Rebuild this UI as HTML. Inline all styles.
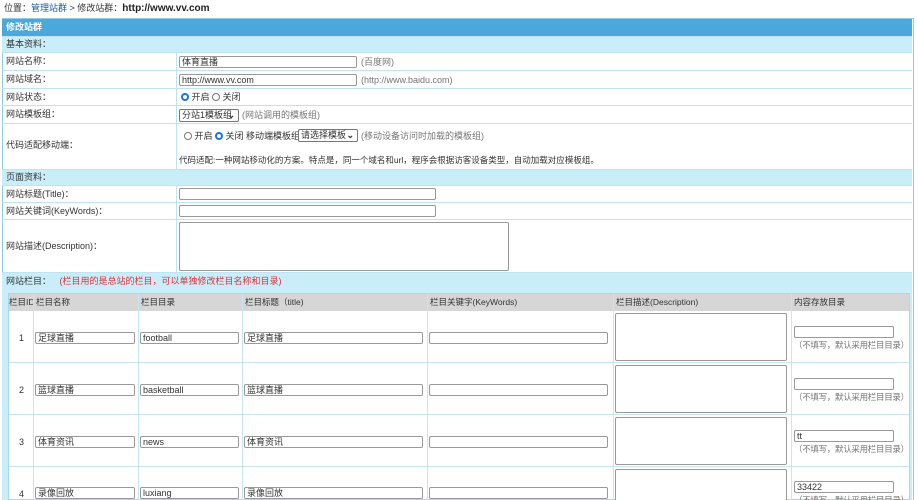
<!DOCTYPE html><html style="overflow:hidden;height:500px"><head><meta charset="utf-8"><style>
body{margin:0;width:918px;height:500px;overflow:hidden;background:#fff;font-family:"Liberation Sans","Noto Sans CJK SC",sans-serif;font-size:9px;line-height:11px;color:#333;position:relative}
.a{position:absolute;white-space:nowrap}
.row{position:absolute;left:2px;width:910px;border-bottom:1px solid #bfe3f0;box-sizing:border-box}
.sec{background:#c9eef9}
.lab{position:absolute;left:4px;white-space:nowrap}
.inp{position:absolute;height:12px;border:1px solid #999;border-radius:2px;background:#fff;box-sizing:border-box;font-size:9px;line-height:10px;padding-left:2px;white-space:nowrap;overflow:hidden}
.ta{position:absolute;border:1px solid #999;border-radius:2px;background:#fff;box-sizing:border-box}
.g{color:#777}
.rad{display:inline-block;width:8px;height:8px;border:1px solid #777;border-radius:50%;vertical-align:-1px;box-sizing:border-box;background:#fff}
.rad.on{border:2.5px solid #1a73e8}
.sel{position:absolute;height:13px;border:1px solid #777;border-radius:2px;box-sizing:border-box;background:#fff;font-size:9px;line-height:11px;padding-left:2px;white-space:nowrap;overflow:hidden}
.sel i{position:absolute;right:3px;top:0;font-style:normal;font-weight:bold}
.sm{font-size:8.5px}
</style></head><body>
<div class="a" style="left:4px;top:3px">位置：<span style="color:#1a5a9a">管理站群</span> &gt; 修改站群：<b style="font-size:10px;color:#222">http://www.vv.com</b></div>
<div style="position:absolute;left:2px;top:18px;width:912px;height:482px;border:1px solid #8fcbe6;border-bottom:none;box-sizing:border-box"></div>
<div class="row" style="top:19px;height:18px;background:#4aa8da;color:#fff;font-weight:bold"><span class="lab" style="top:3px">修改站群</span></div>
<div class="row sec" style="top:37px;height:16px"><span class="lab" style="top:2px">基本资料：</span></div>
<div class="row" style="top:53px;height:18px"><span class="lab" style="top:3px">网站名称：</span></div>
<div class="row" style="top:71px;height:18px"><span class="lab" style="top:3px">网站域名：</span></div>
<div class="row" style="top:89px;height:17px"><span class="lab" style="top:3px">网站状态：</span></div>
<div class="row" style="top:106px;height:18px"><span class="lab" style="top:3px">网站模板组：</span></div>
<div class="row" style="top:124px;height:46px"><span class="lab" style="top:16px">代码适配移动端：</span></div>
<div class="row sec" style="top:170px;height:16px"><span class="lab" style="top:2px">页面资料：</span></div>
<div class="row" style="top:186px;height:17px"><span class="lab" style="top:3px">网站标题(Title)：</span></div>
<div class="row" style="top:203px;height:17px"><span class="lab" style="top:3px">网站关键词(KeyWords)：</span></div>
<div class="row" style="top:220px;height:53px"><span class="lab" style="top:21px">网站描述(Description)：</span></div>
<div class="row sec" style="top:273px;height:227px;border:none"><span class="lab" style="top:3px">网站栏目： <span style="color:#e0303a;margin-left:6px">(栏目用的是总站的栏目，可以单独修改栏目名称和目录)</span></span></div>
<div style="position:absolute;left:176px;top:53px;width:1px;height:117px;background:#bfe3f0"></div>
<div style="position:absolute;left:176px;top:186px;width:1px;height:87px;background:#bfe3f0"></div>

<div class="inp" style="left:179px;top:56px;width:178px">体育直播</div><span class="a g" style="left:361px;top:57px">(百度网)</span>
<div class="inp" style="left:179px;top:74px;width:178px">http://www.vv.com</div><span class="a g" style="left:361px;top:75px">(http://www.baidu.com)</span>
<div class="a" style="left:181px;top:92px"><span class="rad on"></span> 开启 <span class="rad"></span> 关闭</div>
<div class="sel" style="left:179px;top:109px;width:60px">分站1模板组<i>⌄</i></div><span class="a g" style="left:242px;top:110px">(网站调用的模板组)</span>
<div class="a" style="left:184px;top:131px"><span class="rad"></span> 开启 <span class="rad on"></span> 关闭 移动端模板组: </div>
<div class="sel" style="left:298px;top:129px;width:60px">请选择模板<i>⌄</i></div><span class="a g" style="left:361px;top:131px">(移动设备访问时加载的模板组)</span>
<div class="a sm" style="left:179px;top:155px">代码适配:一种网站移动化的方案。特点是，同一个域名和url，程序会根据访客设备类型，自动加载对应模板组。</div>
<div class="inp" style="left:179px;top:188px;width:257px"></div>
<div class="inp" style="left:179px;top:205px;width:257px"></div>
<div class="ta" style="left:179px;top:222px;width:330px;height:49px"></div>

<div style="position:absolute;left:8px;top:293px;width:902px;height:207px;background:#fff;border:1px solid #a8d8ea;box-sizing:border-box"></div>
<div style="position:absolute;left:9px;top:294px;width:900px;height:17px;background:#d6d6d6"></div>
<span class="a sm" style="left:9px;top:297px">栏目ID</span><span class="a sm" style="left:36px;top:297px">栏目名称</span><span class="a sm" style="left:141px;top:297px">栏目目录</span><span class="a sm" style="left:245px;top:297px">栏目标题（title)</span><span class="a sm" style="left:430px;top:297px">栏目关键字(KeyWords)</span><span class="a sm" style="left:616px;top:297px">栏目描述(Description)</span><span class="a sm" style="left:794px;top:297px">内容存放目录</span>
<div style="position:absolute;top:294px;height:206px;left:33px;width:1px;background:#c6e6f2"></div>
<div style="position:absolute;top:294px;height:206px;left:138px;width:1px;background:#c6e6f2"></div>
<div style="position:absolute;top:294px;height:206px;left:242px;width:1px;background:#c6e6f2"></div>
<div style="position:absolute;top:294px;height:206px;left:427px;width:1px;background:#c6e6f2"></div>
<div style="position:absolute;top:294px;height:206px;left:613px;width:1px;background:#c6e6f2"></div>
<div style="position:absolute;top:294px;height:206px;left:791px;width:1px;background:#c6e6f2"></div>
<div style="position:absolute;left:9px;top:362px;width:900px;height:1px;background:#c6e6f2"></div>
<div style="position:absolute;left:9px;top:414px;width:900px;height:1px;background:#c6e6f2"></div>
<div style="position:absolute;left:9px;top:466px;width:900px;height:1px;background:#c6e6f2"></div>

<span class="a" style="left:19px;top:333px">1</span>
<div class="inp" style="left:35px;top:332px;width:100px">足球直播</div><div class="inp" style="left:140px;top:332px;width:99px">football</div><div class="inp" style="left:244px;top:332px;width:179px">足球直播</div><div class="inp" style="left:429px;top:332px;width:179px"></div>
<div class="ta" style="left:615px;top:313px;width:172px;height:48px"></div><div class="inp" style="left:794px;top:326px;width:100px"></div><span class="a g sm" style="left:794px;top:340px;letter-spacing:-0.3px">（不填写，默认采用栏目目录）</span>

<span class="a" style="left:19px;top:385px">2</span>
<div class="inp" style="left:35px;top:384px;width:100px">篮球直播</div><div class="inp" style="left:140px;top:384px;width:99px">basketball</div><div class="inp" style="left:244px;top:384px;width:179px">篮球直播</div><div class="inp" style="left:429px;top:384px;width:179px"></div>
<div class="ta" style="left:615px;top:365px;width:172px;height:48px"></div><div class="inp" style="left:794px;top:378px;width:100px"></div><span class="a g sm" style="left:794px;top:392px;letter-spacing:-0.3px">（不填写，默认采用栏目目录）</span>

<span class="a" style="left:19px;top:437px">3</span>
<div class="inp" style="left:35px;top:436px;width:100px">体育资讯</div><div class="inp" style="left:140px;top:436px;width:99px">news</div><div class="inp" style="left:244px;top:436px;width:179px">体育资讯</div><div class="inp" style="left:429px;top:436px;width:179px"></div>
<div class="ta" style="left:615px;top:417px;width:172px;height:48px"></div><div class="inp" style="left:794px;top:430px;width:100px">tt</div><span class="a g sm" style="left:794px;top:444px;letter-spacing:-0.3px">（不填写，默认采用栏目目录）</span>

<span class="a" style="left:19px;top:489px">4</span>
<div class="inp" style="left:35px;top:487px;width:100px">录像回放</div><div class="inp" style="left:140px;top:487px;width:99px">luxiang</div><div class="inp" style="left:244px;top:487px;width:179px">录像回放</div><div class="inp" style="left:429px;top:487px;width:179px"></div>
<div class="ta" style="left:615px;top:469px;width:172px;height:48px"></div><div class="inp" style="left:794px;top:481px;width:100px">33422</div><span class="a g sm" style="left:794px;top:495px;letter-spacing:-0.3px">（不填写，默认采用栏目目录）</span>
</body></html>
